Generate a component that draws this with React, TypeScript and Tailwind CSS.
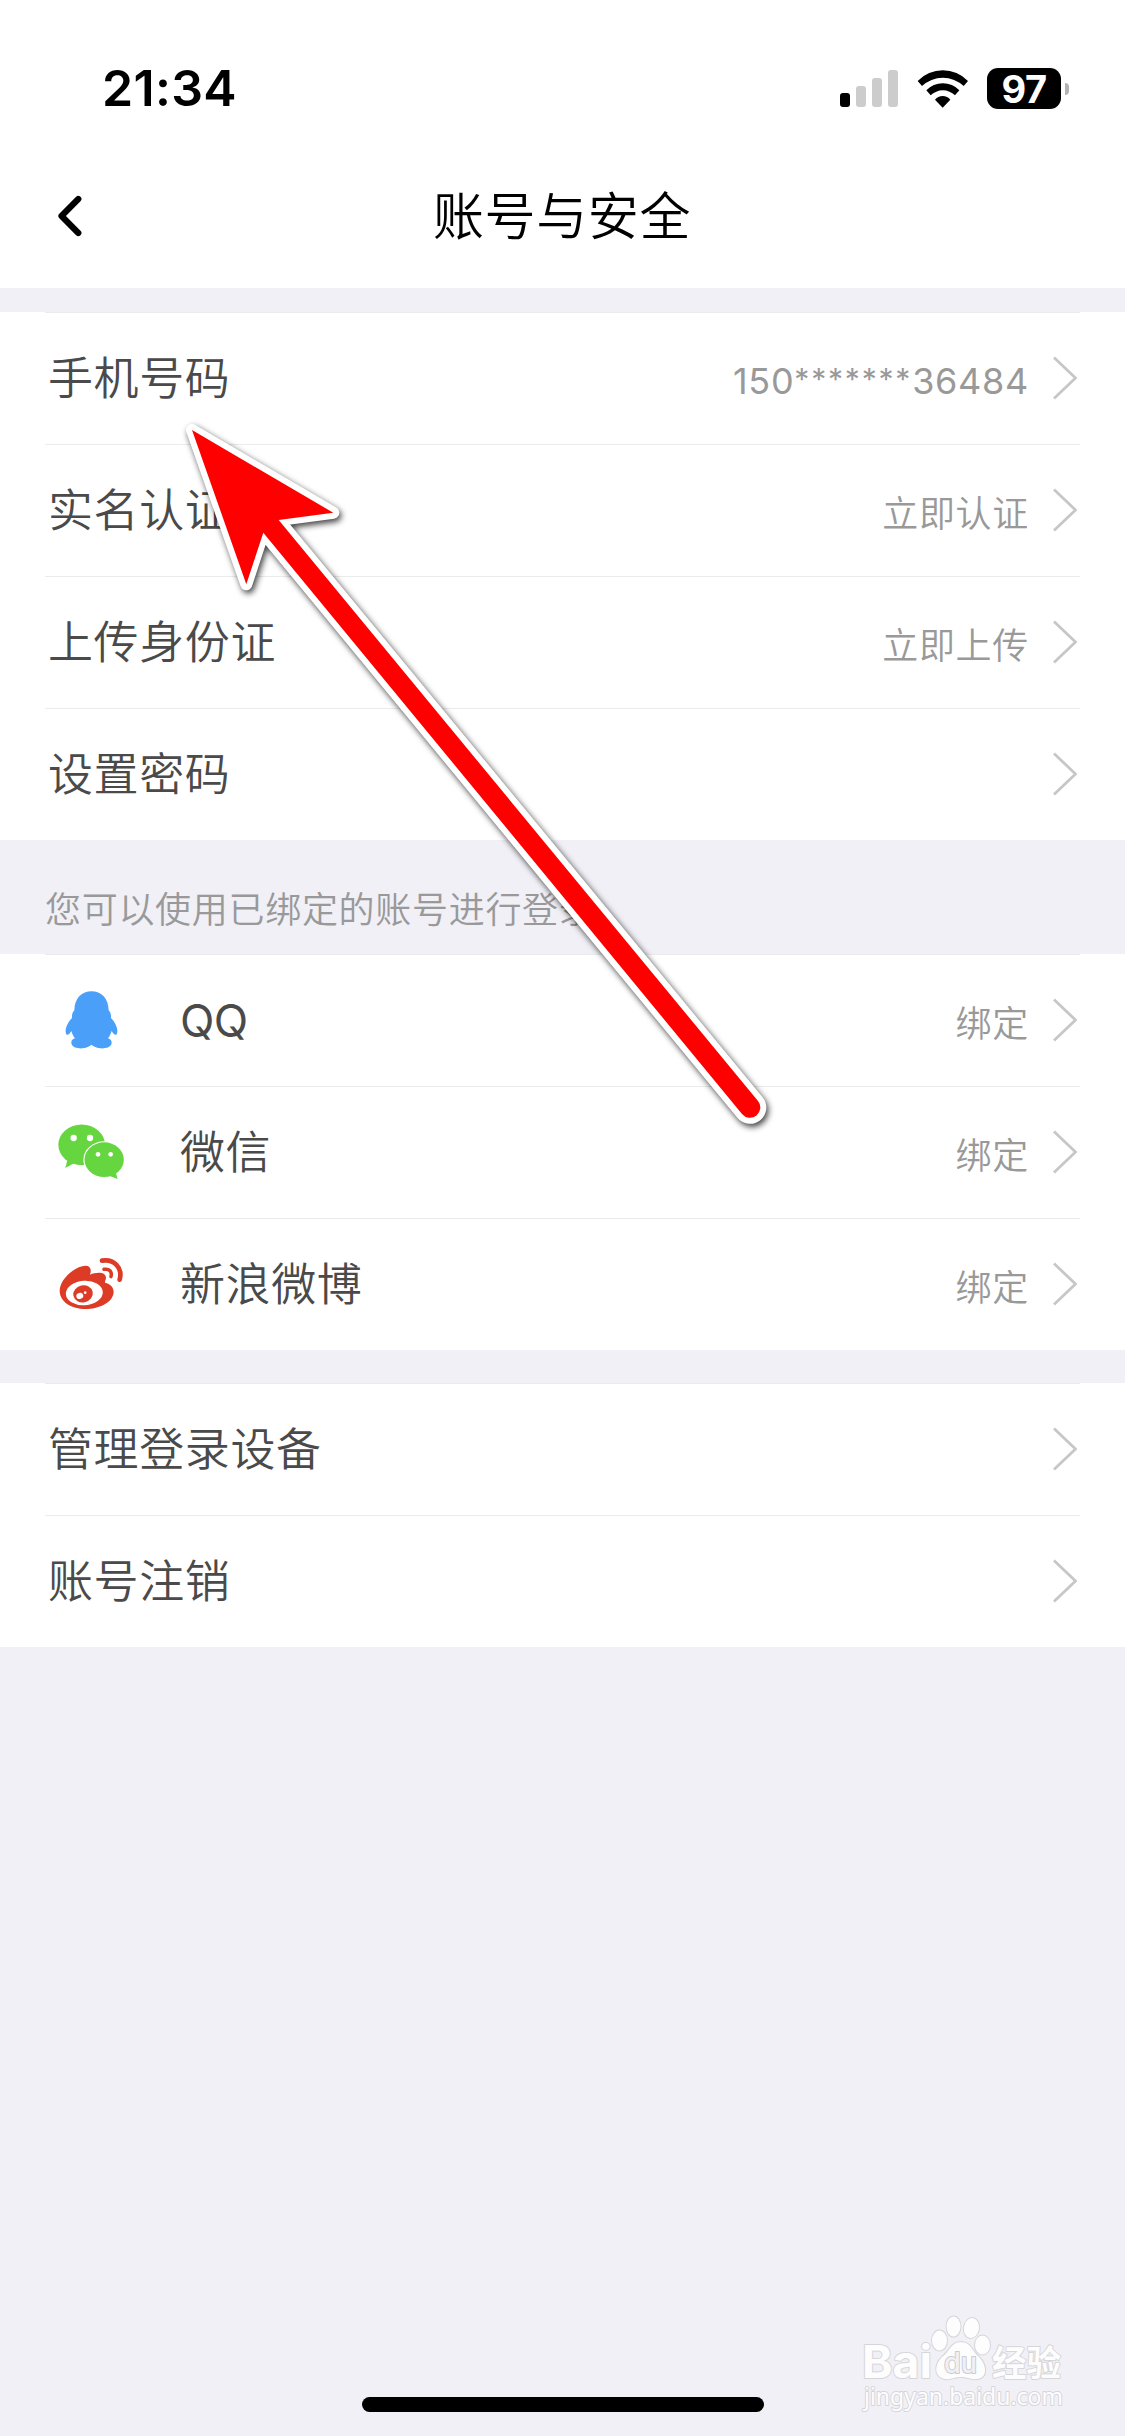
import { ReactNode } from "react";
import clsx from "clsx";

interface RowProps {
    label: string;
    value?: string;
    icon?: ReactNode;
};

// latin text needs a slightly heavier weight than the chinese one
const isLatin = (text: string) => /^[\w*]+$/.test(text);

const SignalIcon = () => (
    <div className="flex items-end gap-1.5">
        <div className="h-[14px] w-[10px] rounded-[3px] bg-black" />
        <div className="h-[21px] w-[10px] rounded-[3px] bg-[#cccccc]" />
        <div className="h-[29px] w-[10px] rounded-[3px] bg-[#cccccc]" />
        <div className="h-[37px] w-[10px] rounded-[3px] bg-[#cccccc]" />
    </div>
);

const WifiIcon = () => (
    <svg className="h-[38px] w-[52px]" viewBox="350 89 156 114">
        <path d="M352 122A105 105 0 0 1 503 122L490 137A92 92 0 0 0 365 137Z" />
        <path d="M378 150A68 68 0 0 1 477 150L464 165A52 52 0 0 0 391 165Z" />
        <path d="M404 178A30 30 0 0 1 450 178L427 202Z" />
    </svg>
);

const StatusBar = () => (
    <div className="flex h-36 items-start justify-between pt-[68px] pr-14 pl-[102px]">
        <div className="font-['Inter',sans-serif] text-[50px] leading-[41px] font-semibold tracking-[0.3px] text-black">
            21:34
        </div>
        <div className="flex items-end">
            <div className="mr-[19px] mb-[2px]">
                <SignalIcon />
            </div>
            <div className="mr-[18px] mb-px">
                <WifiIcon />
            </div>
            <div className="flex h-[41px] w-[74px] items-center justify-center rounded-[11px] bg-black font-['Inter',sans-serif] text-[38px] leading-none font-bold tracking-[-0.6px] text-white">
                97
            </div>
            <div className="mb-[14px] ml-1 h-3 w-1 rounded-r-full bg-[#b3b3b3]" />
        </div>
    </div>
);

const Header = () => (
    <div className="flex h-36 items-center">
        <div className="w-[435px] pl-[57px]">
            <svg className="h-[42px] w-[26px]" viewBox="0 0 26 42" fill="none">
                <path
                    d="M21.3 4L4.5 21L21.3 38"
                    stroke="#000"
                    strokeWidth="6.2"
                    strokeLinecap="round"
                    strokeLinejoin="round"
                />
            </svg>
        </div>
        <div className="ml-[-2px] text-[51px] leading-none tracking-[0.6px] text-black">账号与安全</div>
    </div>
);

const Row: React.FC<RowProps> = ({ label, value, icon }) => {
    return (
        <div className="mr-[45px] ml-[45px] flex h-[132px] items-center border-t border-[#ebebeb] pr-[3px] pl-[3px]">
            {icon && <div className="mt-[-2px] w-[132px] pl-[9px]">{icon}</div>}
            <div
                className={clsx(
                    "flex-1 text-[45px] leading-none text-[#4a4a4a]",
                    isLatin(label) ? "font-normal tracking-[-0.6px]" : "tracking-[0.6px]"
                )}
            >
                {label}
            </div>
            {value && (
                <div
                    className={clsx(
                        "mr-[23px] text-[36px] leading-none tracking-[0.7px] text-[#999999]",
                        isLatin(value) ? "mt-[5px] font-normal" : "mt-[7px]"
                    )}
                >
                    {value.split(/(\*+)/).map((part, i) => (
                        part.startsWith("*") ? (
                            <span key={i} className="align-[4px] text-[30px] leading-none tracking-[1.8px]">{part}</span>
                        ) : part
                    ))}
                </div>
            )}
            <svg className="mt-[-2px] h-11 w-[25px]" viewBox="0 0 25 44" fill="none">
                <path d="M2 1.5L23.5 22L2 42.5" stroke="#c7c7c7" strokeWidth="2.8" />
            </svg>
        </div>
    );
};

const QQIcon = () => (
    <svg className="h-[66px] w-[70px]" viewBox="82 80 210 198">
        <path
            fill="#4a9ff9"
            d="M185.500 93C214 93 236 112 237 150C242 156 245 163 244 173C256 185 264 202 263 214C262 227 255 227 246 212C243 221 240 228 235 234C246 238 247 245 245 252C242 262 226 265 212 264C198 263 190 256 185.500 253C181 256 173 263 159 264C145 265 129 262 126 252C124 245 124 238 136 234C131 228 128 221 125 212C116 227 109 227 108 214C107 202 115 185 127 173C126 163 129 156 134 150C135 112 157 93 185.500 93Z"
        />
    </svg>
);

const WechatIcon = () => (
    <svg className="h-[66px] w-[70px]" viewBox="82 475 210 198">
        <g fill="#65d640">
            <ellipse cx="156" cy="552.500" rx="70" ry="61" />
            <path d="M114 595L107 622L134 607Z" />
        </g>
        <ellipse cx="223.500" cy="597" rx="62.500" ry="55" fill="#fff" />
        <g fill="#65d640">
            <ellipse cx="223.500" cy="597" rx="59" ry="52" />
            <path d="M240 646L264 655L258 635Z" />
        </g>
        <g fill="#fff">
            <circle cx="132" cy="532" r="9.500" />
            <circle cx="181" cy="532" r="9.500" />
            <circle cx="205" cy="581" r="7" />
            <circle cx="243" cy="581" r="7" />
        </g>
    </svg>
);

const WeiboIcon = () => (
    <svg className="h-[66px] w-[70px]" viewBox="82 873 210 198">
        <path
            fill="#dd3b26"
            d="M90 993C90 970 107 949 128 933C141 923 157 916 170 917C183 919 186 930 181 944C199 937 227 934 229 953C229 959 225 963 226 968C242 972 252 981 252 996C250 1030 205 1047 168 1047C125 1047 91 1026 90 993Z"
        />
        <ellipse cx="164" cy="999" rx="55.500" ry="36.500" fill="#fff" transform="rotate(-4 164 999)" />
        <ellipse cx="160" cy="1001.500" rx="29.500" ry="25.500" fill="#dd3b26" transform="rotate(-12 160 1001)" />
        <ellipse cx="150.500" cy="1008" rx="10.500" ry="9" fill="#fff" transform="rotate(-20 150 1008)" />
        <circle cx="166.500" cy="998" r="4" fill="#fff" />
        <g fill="none" stroke="#dd3b26" strokeLinecap="round">
            <path d="M217 902C252 896 280 922 270 959" strokeWidth="14" />
            <path d="M223 928C239 925 248 935 244 950" strokeWidth="10.500" />
        </g>
    </svg>
);

// red pointer laid over the list
const Arrow = () => (
    <svg
        className="pointer-events-none absolute top-[400px] left-[160px] h-[760px] w-[640px] drop-shadow-[2px_3px_3px_rgba(0,0,0,0.75)]"
        viewBox="160 400 640 760"
    >
        <path
            d="M192 430L333.300 512.700L278.700 520L758 1101A10 10 0 0 1 742 1114L263.300 532.700L246.300 584.300Z"
            fill="#fff"
            stroke="#fff"
            strokeWidth="12"
            strokeLinejoin="round"
        />
        <path
            d="M192 430L333.300 512.700L278.700 520L758 1101A10 10 0 0 1 742 1114L263.300 532.700L246.300 584.300Z"
            fill="#ff0000"
        />
    </svg>
);

const Watermark = () => (
    <svg
        className="absolute top-[2300px] left-[840px] h-[130px] w-[260px]"
        viewBox="0 0 260 130"
        fill="#fdfdfe"
        stroke="#d6d6d9"
        strokeWidth="2"
        paintOrder="stroke"
        strokeLinejoin="round"
    >
        <text x="22" y="78" fontSize="45" fontWeight="700" textLength="70" lengthAdjust="spacingAndGlyphs" fontFamily="Inter, sans-serif">Bai</text>
        <ellipse cx="99.500" cy="40.500" rx="7.500" ry="10" />
        <ellipse cx="113.500" cy="26.500" rx="7" ry="10" />
        <ellipse cx="131.500" cy="28" rx="7.500" ry="10" transform="rotate(10 131.500 28)" />
        <ellipse cx="142.500" cy="45" rx="7.500" ry="9.500" />
        <path d="M121 42C131 42 132 51 139 57C147 65 148 78 137 79C131 80 127 77 121 77C115 77 111 80 105 79C94 77 94 65 102 57C110 51 111 42 121 42Z" />
        <text x="104" y="73" fontSize="28" fontWeight="500" textLength="33" lengthAdjust="spacingAndGlyphs" fontFamily="Inter, sans-serif" fill="#f1f0f6" stroke="#cbcbcf">du</text>
        <text x="152" y="76" fontSize="35" fontWeight="700" textLength="69" lengthAdjust="spacingAndGlyphs" fontFamily="'Noto Sans CJK SC', sans-serif">经验</text>
        <text x="24" y="105" fontSize="24" fontWeight="400" textLength="199" lengthAdjust="spacingAndGlyphs" fontFamily="'Noto Sans', sans-serif">jingyan.baidu.com</text>
    </svg>
);

const App = () => {
    return (
        <div className="relative flex h-[2436px] w-[1125px] flex-col overflow-hidden bg-[#f1f0f6] font-['Inter','Noto_Sans_CJK_SC',sans-serif] font-[350]">
            <div className="bg-white">
                <StatusBar />
                <Header />
            </div>

            <div className="mt-6 bg-white">
                <Row label="手机号码" value="150*******36484" />
                <Row label="实名认证" value="立即认证" />
                <Row label="上传身份证" value="立即上传" />
                <Row label="设置密码" />
            </div>

            <div className="flex h-[114px] items-center pt-[25px] pl-[45px] text-[36px] leading-none tracking-[0.7px] text-[#999999]">
                您可以使用已绑定的账号进行登录
            </div>

            <div className="bg-white">
                <Row label="QQ" value="绑定" icon={<QQIcon />} />
                <Row label="微信" value="绑定" icon={<WechatIcon />} />
                <Row label="新浪微博" value="绑定" icon={<WeiboIcon />} />
            </div>

            <div className="mt-[33px] bg-white">
                <Row label="管理登录设备" />
                <Row label="账号注销" />
            </div>

            <div className="mt-auto mb-6 ml-[362px] h-[15px] w-[402px] rounded-full bg-black" />

            <Arrow />
            <Watermark />
        </div>
    );
};

export default App;
